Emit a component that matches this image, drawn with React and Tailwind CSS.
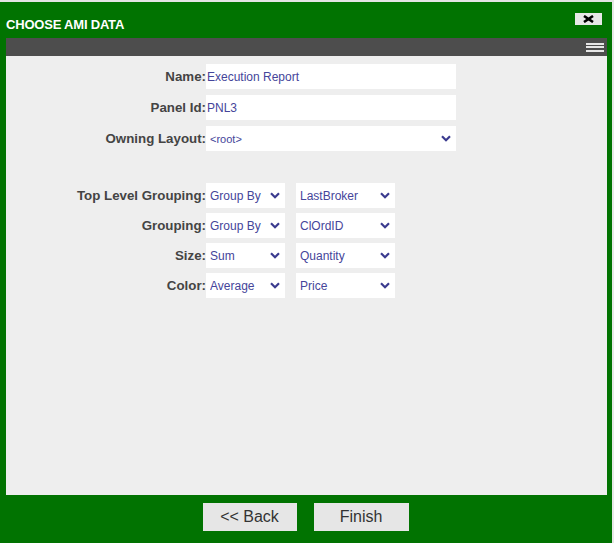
import React from 'react';

const font = { fontFamily: '"Liberation Sans", Arial, sans-serif' };

function Chevron() {
  return (
    <svg width="10" height="7" viewBox="0 0 10 7" className="shrink-0">
      <path d="M1 1.2 L5 5.2 L9 1.2" fill="none" stroke="#3b3b8f" strokeWidth="2.2" />
    </svg>
  );
}

function Field({ value, w = 'w-[250px]', select }) {
  return (
    <div className={`${w} h-[25px] bg-white flex items-center ${select ? 'pl-1' : 'pl-[1px]'} pr-[5px] text-[12px] text-[#45459a]`}>
      <span className="flex-1 truncate">{value}</span>
      {select && <Chevron />}
    </div>
  );
}

function Label({ children }) {
  return (
    <div className="w-[200px] text-right text-[13.3px] font-bold text-[#444]">{children}</div>
  );
}

export default function App() {
  const grouping = [
    ['Top Level Grouping:', 'Group By', 'LastBroker'],
    ['Grouping:', 'Group By', 'ClOrdID'],
    ['Size:', 'Sum', 'Quantity'],
    ['Color:', 'Average', 'Price'],
  ];

  return (
    <div className="w-[614px] h-[543px] bg-[#e8e8e8] flex flex-col" style={font}>
      {/* tira superior */}
      <div className="h-[2px] bg-[#e4e4e4]" />
      <div className="w-[612px] flex-1 bg-[#017301] flex flex-col px-[6px] pr-[5px]">
        {/* titulo */}
        <div className="h-[36px] flex items-center justify-between">
          <span className="text-white text-[13px] font-bold tracking-[-0.2px] mt-[9px]">CHOOSE AMI DATA</span>
          <div className="w-[27px] h-[12px] bg-[#e8e8e8] flex items-center justify-center mr-[5px] mt-[-2px]">
            <svg width="11" height="8" viewBox="0 0 11 8">
              <path d="M1 1 L10 7 M10 1 L1 7" stroke="#000" strokeWidth="2.6" />
            </svg>
          </div>
        </div>
        {/* barra gris */}
        <div className="h-[18px] bg-[#4d4d4d] flex items-center justify-end pr-[3px]">
          <div className="flex flex-col gap-[1.5px]">
            <div className="w-[18px] h-[2px] bg-[#e6e6e6]" />
            <div className="w-[18px] h-[2px] bg-[#e6e6e6]" />
            <div className="w-[18px] h-[2px] bg-[#e6e6e6]" />
          </div>
        </div>
        {/* contenido */}
        <div className="h-[439px] bg-[#eeeeee] pt-[8px]">
          <div className="flex flex-col gap-[6px]">
            <div className="flex items-center">
              <Label>Name:</Label>
              <Field value="Execution Report" />
            </div>
            <div className="flex items-center">
              <Label>Panel Id:</Label>
              <Field value="PNL3" />
            </div>
            <div className="flex items-center">
              <Label>Owning Layout:</Label>
              <Field value={<span className="text-[11px]">&lt;root&gt;</span>} select />
            </div>
          </div>
          <div className="flex flex-col gap-[5px] mt-[32px]">
            {grouping.map(([l, a, b]) => (
              <div key={l} className="flex items-center">
                <Label>{l}</Label>
                <Field value={a} w="w-[79px]" select />
                <div className="w-[11px]" />
                <Field value={b} w="w-[99px]" select />
              </div>
            ))}
          </div>
        </div>
        {/* botones */}
        <div className="flex-1 flex justify-center items-start pt-[8px] gap-[17px] pr-[2px]">
          <button className="w-[94px] h-[28px] bg-[#e6e6e6] text-[16px] text-[#333]">&lt;&lt; Back</button>
          <button className="w-[95px] h-[28px] bg-[#e6e6e6] text-[16px] text-[#333]">Finish</button>
        </div>
      </div>
    </div>
  );
}
